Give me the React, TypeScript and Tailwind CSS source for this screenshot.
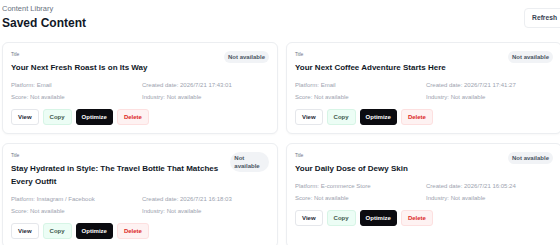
import React from 'react';

interface ContentItem {
  id: number;
  title: string;
  platform: string;
  createdAt: string;
}

const items: ContentItem[] = [
  { id: 1, title: 'Your Next Fresh Roast Is on Its Way', platform: 'Email', createdAt: '2026/7/21 17:43:01' },
  { id: 2, title: 'Your Next Coffee Adventure Starts Here', platform: 'Email', createdAt: '2026/7/21 17:41:27' },
  {
    id: 3,
    title: 'Stay Hydrated in Style: The Travel Bottle That Matches Every Outfit',
    platform: 'Instagram / Facebook',
    createdAt: '2026/7/21 16:18:03',
  },
  { id: 4, title: 'Your Daily Dose of Dewy Skin', platform: 'E-commerce Store', createdAt: '2026/7/21 16:05:24' },
];

function ContentCard({ item }: { item: ContentItem }) {
  return (
    <div className="rounded-[6px] border border-[#eceef1] bg-white p-[8px] shadow-[0_1px_2px_rgba(0,0,0,0.03)]">
      <div className="flex items-start justify-between gap-[8px]">
        <div>
          <p className="text-[4.5px] leading-[8px] text-[#6b7280]">Title</p>
          <h3 className="mt-[2px] text-[8px] font-bold leading-[13px] text-[#111827]">{item.title}</h3>
        </div>
        <span className="rounded-full bg-[#f1f3f6] px-[4px] py-[2px] text-[6px] font-semibold leading-[8px] text-[#4b5563]">
          Not available
        </span>
      </div>

      <div className="mt-[7px] grid grid-cols-2 gap-x-[4px] gap-y-[4px] text-[6px] leading-[8px] text-[#9ca3af]">
        <p>Platform: {item.platform}</p>
        <p>Created date: {item.createdAt}</p>
        <p>Score: Not available</p>
        <p>Industry: Not available</p>
      </div>

      <div className="mt-[8px] flex gap-[4px]">
        <button className="flex h-[16px] items-center rounded-[3px] border border-[#e5e7eb] bg-white px-[6px] text-[6px] font-semibold text-[#1f2937]">
          View
        </button>
        <button className="flex h-[16px] items-center rounded-[3px] border border-[#d7f5e6] bg-[#ecfdf5] px-[6px] text-[6px] font-semibold text-[#3f5a4d]">
          Copy
        </button>
        <button className="flex h-[16px] items-center rounded-[3px] border border-[#0b0b10] bg-[#0b0b10] px-[5px] text-[6px] font-semibold text-white">
          Optimize
        </button>
        <button className="flex h-[16px] items-center rounded-[3px] border border-[#fde0e0] bg-[#fef2f2] px-[6px] text-[6px] font-semibold text-[#dc2626]">
          Delete
        </button>
      </div>
    </div>
  );
}

export default function App() {
  return (
    <div className="h-[245px] w-[560px] overflow-hidden bg-white font-['Liberation_Sans',Arial,sans-serif]">
      <div className="ml-[2px] w-[560px] pt-[4px]">
        <div className="flex items-start justify-between">
          <div>
            <p className="text-[7.5px] leading-[9px] text-[#6b7280]">Content Library</p>
            <h1 className="mt-[3px] text-[12px] font-bold leading-[14px] text-[#111827]">Saved Content</h1>
          </div>
          <button className="-mr-[3px] mt-[4px] flex h-[20px] items-center rounded-[4px] border border-[#eceef1] bg-white px-[7px] text-[6.7px] font-semibold text-[#374151]">
            Refresh
          </button>
        </div>

        <div className="mt-[12px] grid grid-cols-2 gap-x-[8px] gap-y-[9px]">
          {items.map((item) => (
            <ContentCard key={item.id} item={item} />
          ))}
        </div>
      </div>
    </div>
  );
}
